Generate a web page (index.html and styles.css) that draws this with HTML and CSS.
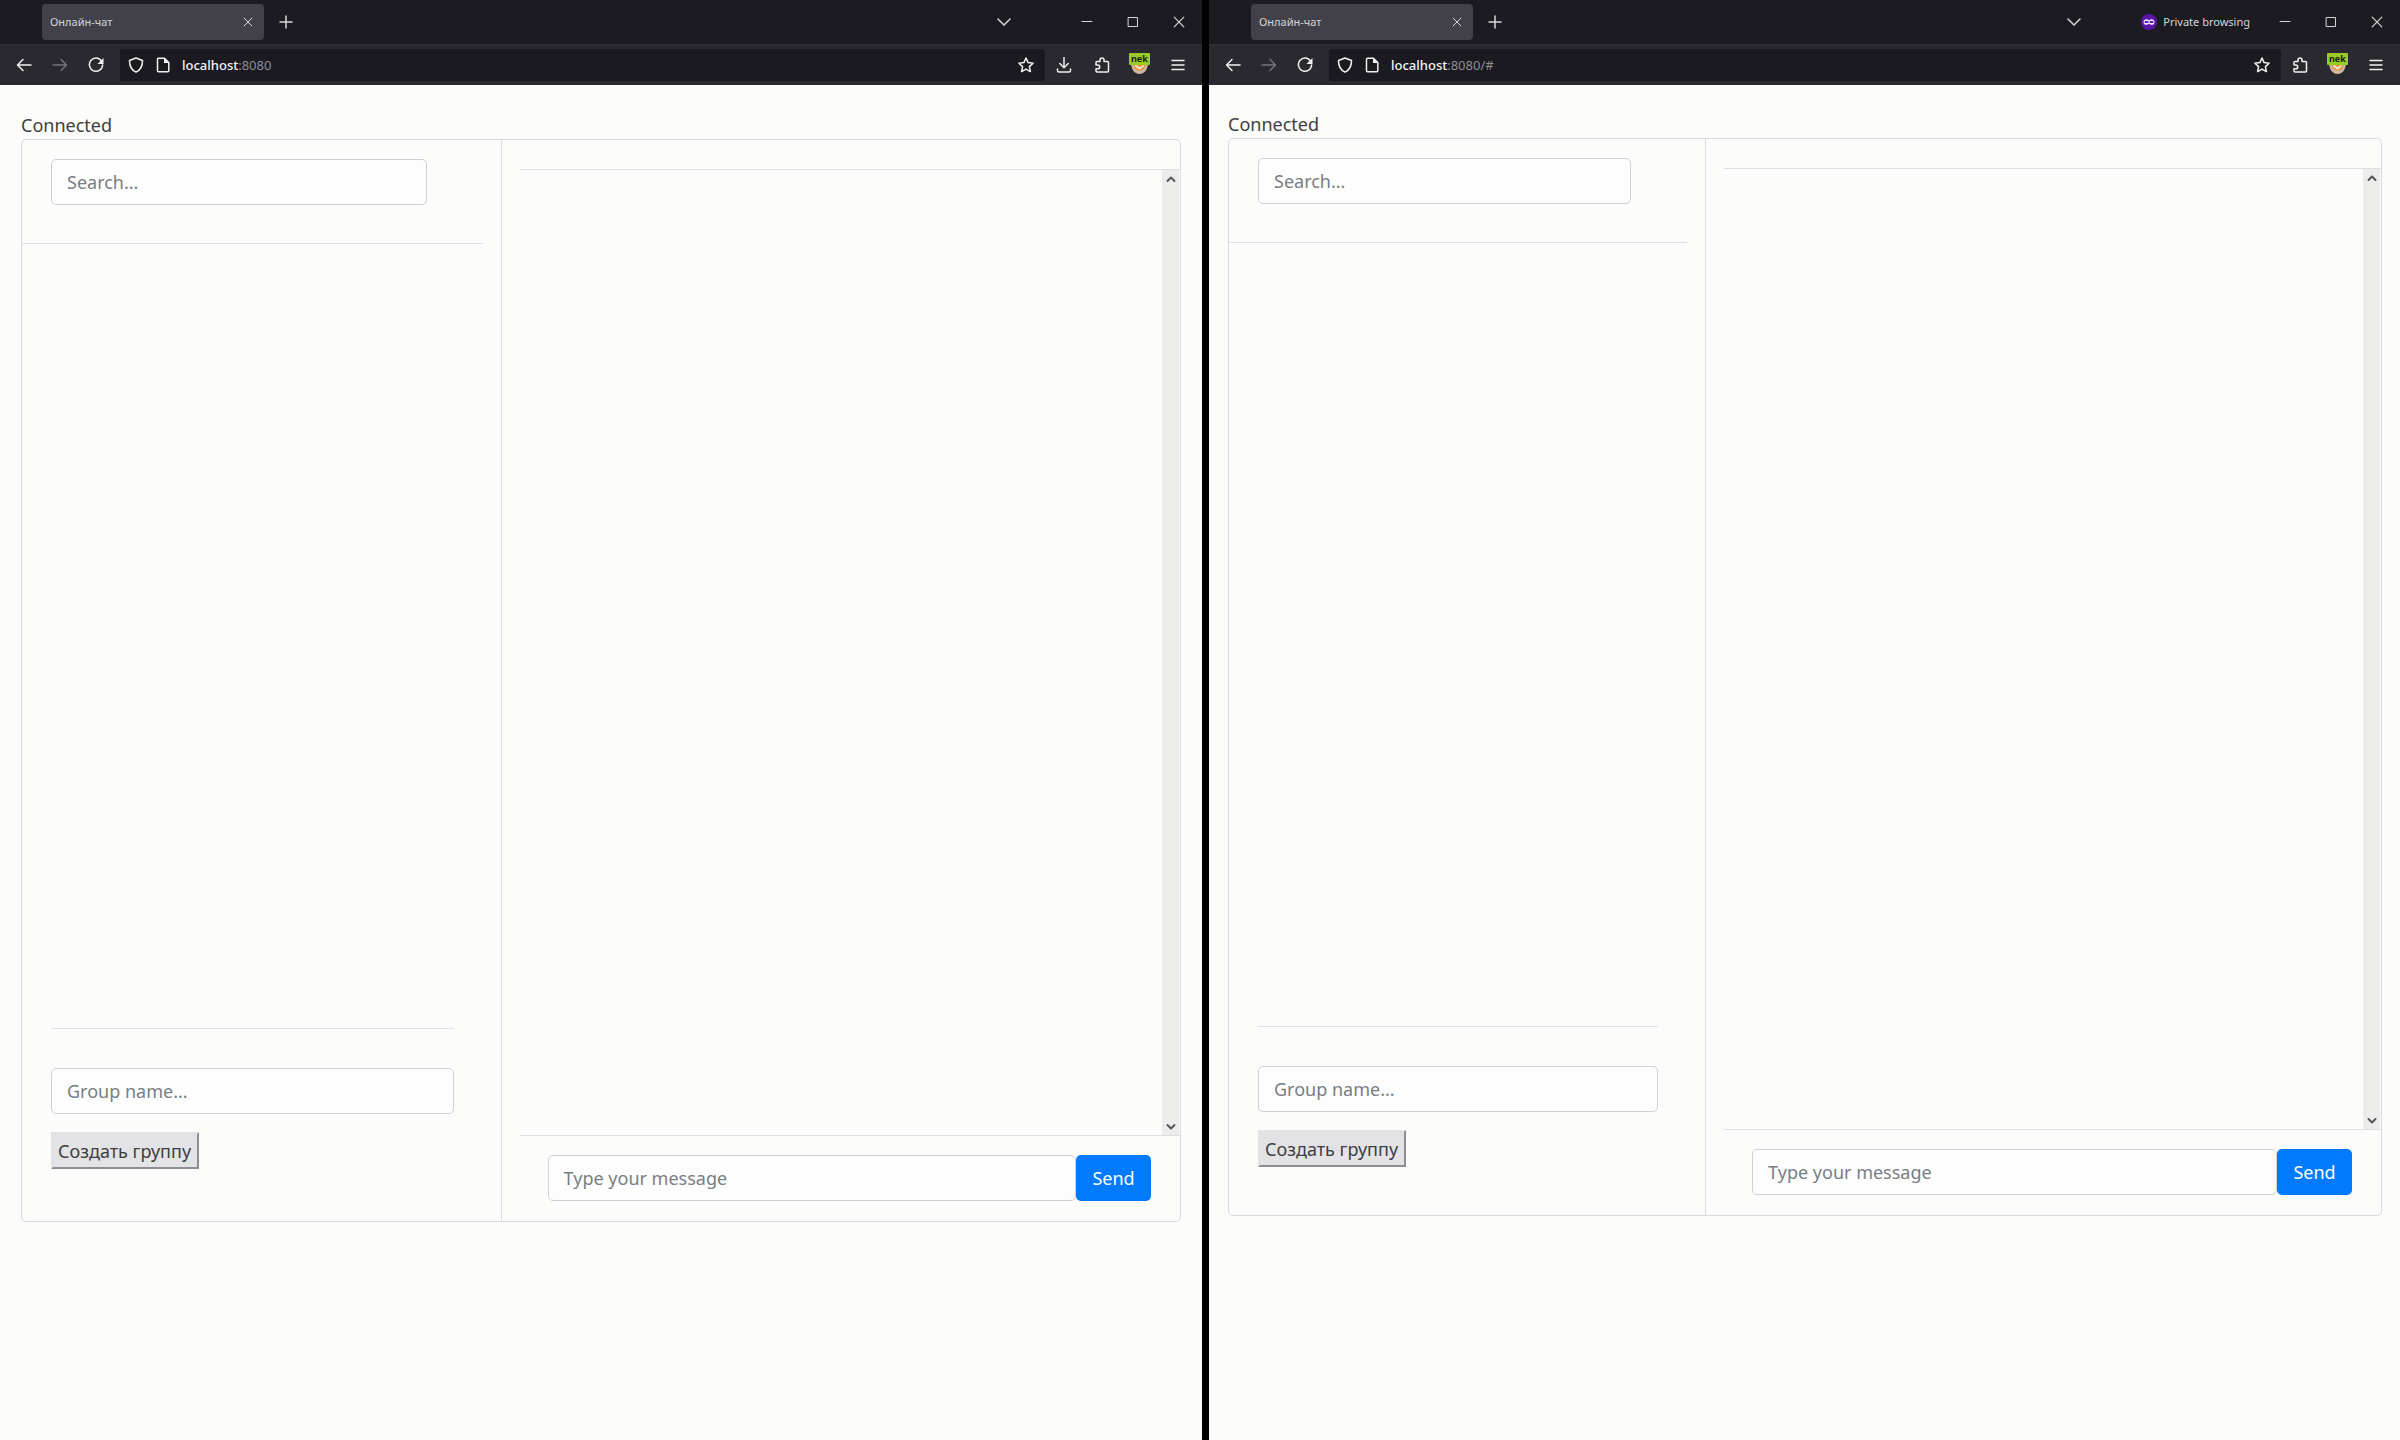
FILE: index.html
```html
<!DOCTYPE html>
<html lang="ru">
<head>
<meta charset="utf-8">
<title>Онлайн-чат</title>
<link rel="stylesheet" href="styles.css">
</head>
<body>
<svg class="sprite" aria-hidden="true">
  <symbol id="close" viewBox="0 0 10 10"><path d="M1 1l8 8M9 1l-8 8"/></symbol>
  <symbol id="plus" viewBox="0 0 14 14"><path d="M7 1v12M1 7h12"/></symbol>
  <symbol id="chevron" viewBox="0 0 14 14"><path d="M1 4l6 6 6-6"/></symbol>
  <symbol id="minus" viewBox="0 0 12 12"><path d="M1 5.5h10"/></symbol>
  <symbol id="square" viewBox="0 0 12 12"><path d="M1.500 1.500h9v9h-9z"/></symbol>
  <symbol id="back" viewBox="0 0 16 16"><path d="M15 8H1.500M7 2.500L1.500 8 7 13.500"/></symbol>
  <symbol id="forward" viewBox="0 0 16 16"><path d="M1 8h13.500M9 2.500L14.500 8 9 13.500"/></symbol>
  <symbol id="reload" viewBox="0 0 16 16"><path d="M13.500 4A6.600 6.600 0 1 0 14.600 8"/><path class="solid" d="M15.500 1v6h-6z"/></symbol>
  <symbol id="shield" viewBox="0 0 16 16"><path d="M8 1l6.500 2.500C14.600 9 12.500 13 8 15.200 3.500 13 1.400 9 1.500 3.500z"/></symbol>
  <symbol id="page" viewBox="0 0 16 16"><path d="M3.500 1.200h6l4.300 4.300v8.300q0 1-1 1H3.500q-1 0-1-1V2.200q0-1 1-1z"/><path class="solid" d="M9 1v5h5z"/></symbol>
  <symbol id="star" viewBox="0 0 16 16"><path d="M8 1l2.100 4.600 5 .6-3.700 3.400 1 5L8 12.100l-4.400 2.500 1-5L.900 6.200l5-.6z"/></symbol>
  <symbol id="download" viewBox="0 0 16 16"><path d="M8 .5v10M3.800 6.500L8 10.700l4.200-4.200M1.500 12v1.500q0 1.500 1.500 1.500h10q1.500 0 1.500-1.500V12"/></symbol>
  <symbol id="puzzle" viewBox="0 0 16 16"><path d="M2 8V5.500q0-1 1-1h3V3a2 2 0 0 1 4 0v1.500h3.500q1 0 1 1V14q0 1-1 1H3q-1 0-1-1v-2.200h1.800a1.900 1.900 0 0 0 0-3.800z"/></symbol>
  <symbol id="menu" viewBox="0 0 14 14"><path d="M1 2.500h12M1 7h12M1 11.500h12"/></symbol>
  <symbol id="mask" viewBox="0 0 16 16">
    <circle class="mask-bg" cx="8" cy="8" r="8"/>
    <path class="mask-eyes" d="M8 6.500C6.500 4.500 2.500 4.500 2.500 8s4 3.500 5.500 1.500c1.500 2 5.500 2 5.500-1.500S9.500 4.500 8 6.500z"/>
    <path class="mask-holes" d="M4.500 8h2M9.500 8h2"/>
  </symbol>
  <symbol id="up" viewBox="0 0 10 8"><path d="M1.500 6L5 2.500 8.500 6"/></symbol>
  <symbol id="down" viewBox="0 0 10 8"><path d="M1.500 2L5 5.500 8.500 2"/></symbol>
</svg>

<div class="desktop">
  <section class="window">
    <header class="titlebar">
      <div class="tab"><span>Онлайн-чат</span><button class="tab-close" aria-label="Close tab"><svg class="i10"><use href="#close"/></svg></button></div>
      <button class="new-tab" aria-label="New tab"><svg class="i14"><use href="#plus"/></svg></button>
      <div class="caption">
        <button class="list-tabs" aria-label="List tabs"><svg class="i14 bold"><use href="#chevron"/></svg></button>
        <button aria-label="Minimize"><svg class="i12"><use href="#minus"/></svg></button>
        <button aria-label="Maximize"><svg class="i12"><use href="#square"/></svg></button>
        <button aria-label="Close"><svg class="i12"><use href="#close"/></svg></button>
      </div>
    </header>
    <nav class="toolbar">
      <button aria-label="Back"><svg><use href="#back"/></svg></button>
      <button aria-label="Forward" disabled><svg><use href="#forward"/></svg></button>
      <button aria-label="Reload"><svg><use href="#reload"/></svg></button>
      <div class="address">
        <svg><use href="#shield"/></svg><svg><use href="#page"/></svg>
        <div class="url" role="textbox" aria-label="Address"><b>localhost</b>:8080</div>
        <button aria-label="Bookmark"><svg><use href="#star"/></svg></button>
      </div>
      <button aria-label="Downloads"><svg><use href="#download"/></svg></button>
      <button aria-label="Extensions"><svg><use href="#puzzle"/></svg></button>
      <button aria-label="Account">
        <svg class="avatar" viewBox="0 0 22 24">
          <path class="face" d="M2 9h17c0 7-3 12-8.500 12S2 16 2 9z"/>
          <path class="skin" d="M4.500 11h12c0 4-2 6.500-6 6.500s-6-2.500-6-6.500z"/>
          <path class="mouth" d="M7 13l3.500 2.500L14 13"/>
          <rect class="tag" x="0" y="0" width="21" height="12" rx="1"/>
          <text class="tag-text" x="2" y="9">nek</text>
        </svg>
      </button>
      <button aria-label="Menu"><svg class="i14"><use href="#menu"/></svg></button>
    </nav>
    <main class="page">
      <div class="status">Connected</div>
      <div class="card">
        <aside class="sidebar">
          <div class="search"><input class="field" type="text" placeholder="Search..." aria-label="Search"></div>
          <div class="people"></div>
          <form class="group">
            <input class="field" type="text" placeholder="Group name..." aria-label="Group name">
            <button class="create" type="button">Создать группу</button>
          </form>
        </aside>
        <section class="chat">
          <div class="messages">
            <div class="scrollbar">
              <button aria-label="Scroll up"><svg><use href="#up"/></svg></button>
              <button aria-label="Scroll down"><svg><use href="#down"/></svg></button>
            </div>
          </div>
          <form class="composer">
            <input class="field" type="text" placeholder="Type your message" aria-label="Message">
            <button class="send" type="button">Send</button>
          </form>
        </section>
      </div>
    </main>
  </section>

  <section class="window private">
    <header class="titlebar">
      <div class="tab"><span>Онлайн-чат</span><button class="tab-close" aria-label="Close tab"><svg class="i10"><use href="#close"/></svg></button></div>
      <button class="new-tab" aria-label="New tab"><svg class="i14"><use href="#plus"/></svg></button>
      <div class="caption">
        <button class="list-tabs" aria-label="List tabs"><svg class="i14 bold"><use href="#chevron"/></svg></button>
        <div class="badge"><svg><use href="#mask"/></svg><span>Private browsing</span></div>
        <button aria-label="Minimize"><svg class="i12"><use href="#minus"/></svg></button>
        <button aria-label="Maximize"><svg class="i12"><use href="#square"/></svg></button>
        <button aria-label="Close"><svg class="i12"><use href="#close"/></svg></button>
      </div>
    </header>
    <nav class="toolbar">
      <button aria-label="Back"><svg><use href="#back"/></svg></button>
      <button aria-label="Forward" disabled><svg><use href="#forward"/></svg></button>
      <button aria-label="Reload"><svg><use href="#reload"/></svg></button>
      <div class="address">
        <svg><use href="#shield"/></svg><svg><use href="#page"/></svg>
        <div class="url" role="textbox" aria-label="Address"><b>localhost</b>:8080/#</div>
        <button aria-label="Bookmark"><svg><use href="#star"/></svg></button>
      </div>
      <button aria-label="Extensions"><svg><use href="#puzzle"/></svg></button>
      <button aria-label="Account">
        <svg class="avatar" viewBox="0 0 22 24">
          <path class="face" d="M2 9h17c0 7-3 12-8.500 12S2 16 2 9z"/>
          <path class="skin" d="M4.500 11h12c0 4-2 6.500-6 6.500s-6-2.500-6-6.500z"/>
          <path class="mouth" d="M7 13l3.500 2.500L14 13"/>
          <rect class="tag" x="0" y="0" width="21" height="12" rx="1"/>
          <text class="tag-text" x="2" y="9">nek</text>
        </svg>
      </button>
      <button aria-label="Menu"><svg class="i14"><use href="#menu"/></svg></button>
    </nav>
    <main class="page">
      <div class="status">Connected</div>
      <div class="card">
        <aside class="sidebar">
          <div class="search"><input class="field" type="text" placeholder="Search..." aria-label="Search"></div>
          <div class="people"></div>
          <form class="group">
            <input class="field" type="text" placeholder="Group name..." aria-label="Group name">
            <button class="create" type="button">Создать группу</button>
          </form>
        </aside>
        <section class="chat">
          <div class="messages">
            <div class="scrollbar">
              <button aria-label="Scroll up"><svg><use href="#up"/></svg></button>
              <button aria-label="Scroll down"><svg><use href="#down"/></svg></button>
            </div>
          </div>
          <form class="composer">
            <input class="field" type="text" placeholder="Type your message" aria-label="Message">
            <button class="send" type="button">Send</button>
          </form>
        </section>
      </div>
    </main>
  </section>
</div>
</body>
</html>
```
FILE: styles.css
```css
* { box-sizing: border-box; }

body {
  margin: 0;
  background: #000;
  font: 18px/28px "Noto Sans", "Open Sans", sans-serif;
  color: #3c3f42;
}

.sprite { position: absolute; width: 0; height: 0; }

button, input { font: inherit; color: inherit; margin: 0; }
button { background: none; border: 0; padding: 0; }
form { margin: 0; }

svg {
  width: 16px;
  height: 16px;
  flex: none;
  display: block;
  fill: none;
  stroke: currentColor;
  stroke-width: 1.5;
  stroke-linejoin: round;
  stroke-linecap: round;
}
.solid { fill: currentColor; stroke: none; }
.i10 { width: 10px; height: 10px; stroke-width: 1; }
.i12 { width: 12px; height: 12px; stroke-width: 1; }
.i14 { width: 14px; height: 14px; }

.desktop {
  display: grid;
  grid-template-columns: 1202fr 1191fr;
  column-gap: 7px;
  min-height: 100vh;
}
.window { display: flex; flex-direction: column; background: #fcfcfb; min-width: 0; }

/* browser chrome */
.titlebar {
  display: flex;
  align-items: center;
  height: 44px;
  padding-left: 42px;
  background: #1c1b21;
  color: #d6d6da;
  font-size: 11px;
  line-height: 16px;
}
.tab {
  display: flex;
  align-items: center;
  justify-content: space-between;
  width: 222px;
  height: 36px;
  padding: 0 11px 0 8px;
  border-radius: 4px;
  background: #42414a;
}
.new-tab { padding: 8px; margin-left: 7px; }
.caption { display: flex; align-items: center; margin-left: auto; }
.caption button { display: grid; place-items: center; width: 46px; height: 44px; }
.caption .list-tabs { margin-right: 37px; }
.private .caption .list-tabs { margin-right: 44px; }
.badge { display: flex; align-items: center; gap: 6px; margin-right: 12px; }
.mask-bg { fill: #5b14a8; stroke: none; }
.mask-eyes { fill: #efe6fa; stroke: none; }
.mask-holes { stroke: #5b14a8; stroke-width: 2; }

.toolbar {
  display: flex;
  align-items: center;
  height: 41px;
  padding: 0 5px;
  background: #2a2930;
  color: #f0f0f3;
  border-top: 1px solid #303038;
}
.toolbar button { display: grid; place-items: center; width: 38px; height: 32px; }
.toolbar > button:first-child { width: 37px; }
.toolbar > button:disabled { color: #74747a; width: 35px; }
.address {
  flex: 1;
  display: flex;
  align-items: center;
  gap: 11px;
  height: 32px;
  margin-left: 5px;
  padding: 0 4px 0 8px;
  border-radius: 3px;
  background: #1b1a20;
}
.address button { width: 30px; }
.url { flex: 1; font-size: 13px; line-height: 20px; color: #8f8f96; }
.url b { font-weight: 500; color: #f4f4f6; }
.toolbar .avatar { width: 22px; height: 24px; stroke: none; }
.face { fill: #cbb7a2; }
.skin { fill: #e8933c; }
.toolbar .mouth { fill: none; stroke: #f6e3cf; stroke-width: 2; }
.tag { fill: #9acb22; }
.tag-text { font: 700 9px "Noto Sans", sans-serif; fill: #16240a; }

/* chat page */
.page { padding: 26px 21px 40px; }
.private .page { padding: 25px 18px 40px 19px; }

.card {
  display: grid;
  grid-template-columns: 480fr 679fr;
  border: 1px solid #d9d9dc;
  border-radius: 5px;
}
.sidebar { display: flex; flex-direction: column; border-right: 1px solid #dcdce4; }
.search {
  margin-right: 18px;
  padding: 19px 56px 38px 29px;
  border-bottom: 1px solid #e0e0e4;
}
.people { flex: 1; }
.group {
  margin: 0 47px 0 29px;
  padding: 39px 0 52px;
  border-top: 1px solid #e0e0e4;
}
.private .group { padding-bottom: 48px; }

.field {
  display: block;
  width: 100%;
  height: 46px;
  padding: 0 15px;
  border: 1px solid #cfd1d6;
  border-radius: 5px;
  background: #fdfdfd;
}
.field::placeholder { color: #797e84; opacity: 1; }

.create {
  display: block;
  margin-top: 18px;
  height: 37px;
  padding: 0 6px 0 5px;
  background: #e3e3e6;
  border: 2px solid;
  border-color: #e3e3e6 #8d8d96 #8d8d96 #e3e3e6;
}

.chat { padding: 29px 0 0 18px; min-width: 0; }
.messages {
  display: flex;
  justify-content: flex-end;
  height: calc(100vh - 473px);
  padding-right: 1px;
  border: solid #e0e0e4;
  border-width: 1px 0;
}
.private .messages { height: calc(100vh - 478px); }
.scrollbar {
  display: flex;
  flex-direction: column;
  justify-content: space-between;
  width: 17px;
  background: #ececea;
  color: #55565a;
}
.scrollbar button { display: grid; place-items: center; height: 17px; }
.scrollbar svg { width: 10px; height: 8px; stroke-width: 2; }

.composer { display: flex; padding: 19px 29px 20px 28px; }
.composer .field { flex: 1; min-width: 0; }
.send {
  width: 75px;
  height: 46px;
  border-radius: 5px;
  background: #007bff;
  color: #fff;
}
```
